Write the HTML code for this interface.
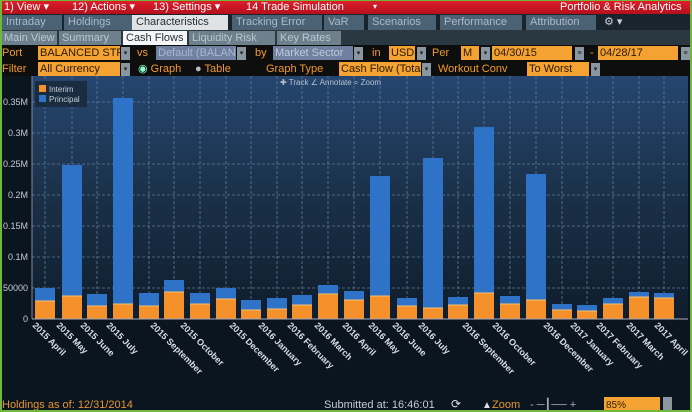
<!DOCTYPE html>
<html><head><style>
*{margin:0;padding:0;box-sizing:border-box}
body{width:692px;height:412px;background:#0b1520;font-family:"Liberation Sans",sans-serif;position:relative;overflow:hidden}
.a{position:absolute;white-space:nowrap}
.red{left:0;top:0;width:692px;height:14px;background:linear-gradient(#e0202e,#b50f1c);color:#fff;font-size:11px;line-height:14px}
.tabs{left:0;top:14px;width:692px;height:16px;background:#1a242c}
.t{position:absolute;top:1px;height:15px;background:#4b6274;color:#a9bccb;font-size:11px;line-height:15px;padding-left:4px}
.sub{left:0;top:30px;width:692px;height:15px;background:#2a3842}
.s{position:absolute;top:1px;height:14px;background:#6d808c;color:#b9c8d2;font-size:11px;line-height:14px;padding-left:3px}
.ctl{left:0;top:45px;width:692px;height:31px;background:#0e0e0e}
.o{color:#f29a2e;font-size:11px;line-height:14px}
.f{position:absolute;height:14px;background:#f4a232;color:#2a1a00;font-size:11px;line-height:14px;padding-left:2px;overflow:hidden}
.dd{position:absolute;width:9px;height:13px;background:#8a96a0;color:#222;font-size:7px;text-align:center;line-height:13px}
.frame{left:0;top:0;width:692px;height:412px;border:2px solid #6fb83a;border-top-width:1px;pointer-events:none}
</style></head><body>
<div class="a red">
<span class="a" style="left:4px">1) View ▾</span>
<span class="a" style="left:72px">12) Actions ▾</span>
<span class="a" style="left:153px">13) Settings ▾</span>
<span class="a" style="left:246px">14 Trade Simulation</span>
<span class="a" style="left:373px;font-size:8px">▾</span>
<span class="a" style="left:560px">Portfolio &amp; Risk Analytics</span>
</div>
<div class="a tabs">
<div class="t" style="left:2px;width:60px">Intraday</div>
<div class="t" style="left:64px;width:68px">Holdings</div>
<div class="t" style="left:132px;width:96px;background:#dfe3e6;color:#2a3038">Characteristics</div>
<div class="t" style="left:232px;width:90px">Tracking Error</div>
<div class="t" style="left:324px;width:40px">VaR</div>
<div class="t" style="left:368px;width:68px">Scenarios</div>
<div class="t" style="left:440px;width:82px">Performance</div>
<div class="t" style="left:526px;width:70px">Attribution</div>
<div class="a" style="left:604px;top:1px;color:#ccd;font-size:11px">⚙ ▾</div>
</div>
<div class="a sub">
<div class="s" style="left:1px;width:56px">Main View</div>
<div class="s" style="left:59px;width:62px">Summary</div>
<div class="s" style="left:123px;width:64px;background:#f4f6f7;color:#2a3038">Cash Flows</div>
<div class="s" style="left:189px;width:86px">Liquidity Risk</div>
<div class="s" style="left:277px;width:64px">Key Rates</div>
</div>
<div class="a ctl">
<span class="a o" style="left:2px;top:1px">Port</span>
<div class="f" style="left:38px;top:1px;width:82px">BALANCED STRA</div><div class="dd" style="left:121px;top:2px">▾</div>
<span class="a o" style="left:137px;top:1px">vs</span>
<div class="f" style="left:156px;top:1px;width:80px;background:#6f80a0;color:#aab8d0">Default (BALAN</div><div class="dd" style="left:237px;top:2px">▾</div>
<span class="a o" style="left:255px;top:1px">by</span>
<div class="f" style="left:273px;top:1px;width:80px;background:#6f80a0;color:#c0cadb">Market Sector</div><div class="dd" style="left:354px;top:2px">▾</div>
<span class="a o" style="left:372px;top:1px">in</span>
<div class="f" style="left:389px;top:1px;width:26px">USD</div><div class="dd" style="left:417px;top:2px">▾</div>
<span class="a o" style="left:432px;top:1px">Per</span>
<div class="f" style="left:461px;top:1px;width:18px">M</div><div class="dd" style="left:481px;top:2px">▾</div>
<div class="f" style="left:492px;top:1px;width:80px">04/30/15</div><div class="dd" style="left:575px;top:2px">≡</div>
<span class="a o" style="left:590px;top:1px">-</span>
<div class="f" style="left:598px;top:1px;width:80px">04/28/17</div><div class="dd" style="left:681px;top:2px">≡</div>
<span class="a o" style="left:2px;top:17px">Filter</span>
<div class="f" style="left:38px;top:17px;width:82px">All Currency</div><div class="dd" style="left:121px;top:18px">▾</div>
<span class="a o" style="left:138px;top:17px"><span style="color:#8fc">◉</span> Graph</span>
<span class="a o" style="left:195px;top:17px"><span style="color:#bbb">●</span> Table</span>
<span class="a o" style="left:266px;top:17px">Graph Type</span>
<div class="f" style="left:339px;top:17px;width:82px">Cash Flow (Tota</div><div class="dd" style="left:422px;top:18px">▾</div>
<span class="a o" style="left:438px;top:17px">Workout Conv</span>
<div class="f" style="left:527px;top:17px;width:62px">To Worst</div><div class="dd" style="left:591px;top:18px">▾</div>
</div>
<svg class="a" style="left:0;top:76px" width="692" height="336" viewBox="0 76 692 336" font-family="Liberation Sans,sans-serif">
<defs><linearGradient id="g" x1="0" y1="0" x2="0" y2="1"><stop offset="0" stop-color="#264670"/><stop offset="0.5" stop-color="#1a3048"/><stop offset="1" stop-color="#0f1d2c"/></linearGradient></defs>
<rect x="32" y="76" width="656" height="243" fill="url(#g)"/>
<g stroke="#5f7a96" stroke-dasharray="3,2" stroke-width="0.8">
<line x1="32" x2="688" y1="102" y2="102"/><line x1="32" x2="688" y1="133" y2="133"/><line x1="32" x2="688" y1="164" y2="164"/><line x1="32" x2="688" y1="195" y2="195"/><line x1="32" x2="688" y1="226" y2="226"/><line x1="32" x2="688" y1="257" y2="257"/><line x1="32" x2="688" y1="288" y2="288"/>
</g>
<g stroke="#5f7a96" stroke-dasharray="3,2" stroke-width="0.8" id="vg"></g>
<g id="bars"></g>
<line x1="32" x2="688" y1="319" y2="319" stroke="#aab" stroke-width="1"/>
<line x1="32" x2="32" y1="76" y2="319" stroke="#889" stroke-width="1"/>
<g fill="#c4ccd6" font-size="9" text-anchor="end">
<text x="28" y="105">0.35M</text><text x="28" y="136">0.3M</text><text x="28" y="167">0.25M</text><text x="28" y="198">0.2M</text><text x="28" y="229">0.15M</text><text x="28" y="260">0.1M</text><text x="28" y="291">50000</text><text x="28" y="322">0</text>
</g>
<rect x="35" y="81" width="52" height="26" fill="#1a2c40"/>
<rect x="39" y="85" width="7" height="7" fill="#f5912a"/><text x="49" y="92" fill="#c8d0da" font-size="8">Interim</text>
<rect x="39" y="95" width="7" height="7" fill="#2f73c8"/><text x="49" y="102" fill="#c8d0da" font-size="8">Principal</text>
<text x="280" y="85" fill="#b8c2cc" font-size="8">✚ Track  ∠ Annotate  ⌕ Zoom</text>
<g id="lbl" fill="#d8dde2" font-size="9" font-weight="bold"></g>
<text x="2" y="408" fill="#e8962e" font-size="11">Holdings as of: 12/31/2014</text>
<text x="324" y="408" fill="#c4ccd6" font-size="11">Submitted at: 16:46:01</text>
<text x="451" y="408" fill="#dde" font-size="12">⟳</text>
<text x="482" y="408" fill="#dde" font-size="10">▲</text><text x="492" y="408" fill="#e8962e" font-size="11">Zoom</text>
<text x="530" y="408" fill="#aab" font-size="11">- ─┃── +</text>
<rect x="604" y="397" width="56" height="13" fill="#f4a232"/><text x="606" y="408" fill="#3a2000" font-size="10">85%</text>
<rect x="663" y="397" width="9" height="13" fill="#8a96a0"/>
</svg>
<div class="a frame"></div>
<script>
var B=[[35,288,301],[62,165,296],[87,294,306],[113,98,304],[139,293,306],[164,280,292],[190,293,304],[216,288,299],[241,300,310],[267,298,309],[292,295,305],[318,285,294],[344,291,300],[370,176,296],[397,298,306],[423,158,308],[448,297,305],[474,127,293],[500,296,304],[526,174,300],[552,304,310],[577,305,311],[603,298,304],[629,292,297],[654,293,298]];
var L=["2015 April","2015 May","2015 June","2015 July","2015 September","2015 October","2015 December","2016 January","2016 February","2016 March","2016 April","2016 May","2016 June","2016 July","2016 September","2016 October","2016 December","2017 January","2017 February","2017 March","2017 April"];
var LX=[32,56,80,106,150,180,229,258,287,314,342,368,392,418,462,492,543,570,596,626,654];
var ns="http://www.w3.org/2000/svg",b=document.getElementById('bars'),v=document.getElementById('vg'),l=document.getElementById('lbl');
function el(t,a,p){var e=document.createElementNS(ns,t);for(var k in a)e.setAttribute(k,a[k]);p.appendChild(e);return e}
B.forEach(function(r){var cx=r[0]+10;el('line',{x1:cx,x2:cx,y1:76,y2:319},v);
el('rect',{x:r[0],y:r[1],width:20,height:r[2]-r[1],fill:'#2f73c8'},b);
el('rect',{x:r[0],y:r[2],width:20,height:319-r[2],fill:'#f5912a'},b);
el('line',{x1:r[0],x2:r[0]+20,y1:r[2],y2:r[2],stroke:'#f8c070','stroke-width':1},b);});
L.forEach(function(s,i){var t=el('text',{x:LX[i],y:326,transform:'rotate(45 '+LX[i]+' 326)'},l);t.textContent=s;});
</script>
</body></html>
